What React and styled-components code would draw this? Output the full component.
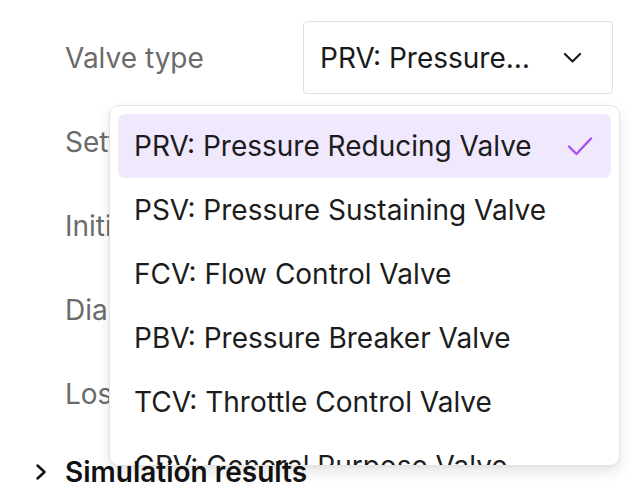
import styled, { createGlobalStyle } from "styled-components";

const GlobalStyle = createGlobalStyle`
  html, body {
    margin: 0;
    padding: 0;
    background: #ffffff;
  }
  body {
    font-family: Inter, "Noto Sans", "Liberation Sans", sans-serif;
    -webkit-font-smoothing: antialiased;
  }
`;

const Panel = styled.div`
  position: relative;
  width: 638px;
  height: 488px;
  box-sizing: border-box;
  padding: 21px 25px 0 35px;
  overflow: hidden;
  background: #ffffff;
`;

const Fields = styled.div`
  display: flex;
  flex-direction: column;
  gap: 11px;
  padding-left: 30px;
`;

const Field = styled.div`
  display: grid;
  grid-template-columns: 1fr 310px;
  align-items: center;
  height: 73px;
`;

const Label = styled.span`
  font-size: 28px;
  color: #6b6b6b;
  white-space: nowrap;
`;

const SelectWrap = styled.div`
  position: relative;
  height: 100%;
`;

const SelectBox = styled.button`
  display: flex;
  align-items: center;
  width: 100%;
  height: 100%;
  box-sizing: border-box;
  padding: 0 30px 0 16px;
  border: 1px solid #e0e0e0;
  border-radius: 4px;
  background: #ffffff;
  font: inherit;
  font-size: 28px;
  color: #1a1a1a;
  cursor: pointer;
  text-align: left;
`;

const SelectValue = styled.span`
  flex: 1;
  min-width: 0;
  overflow: hidden;
  white-space: nowrap;
  text-overflow: ellipsis;
  padding-right: 30px;
`;

const Input = styled.div`
  height: 100%;
  box-sizing: border-box;
  border: 1px solid #e0e0e0;
  border-radius: 4px;
  display: flex;
  align-items: center;
  padding: 0 16px;
  font-size: 28px;
  color: #1a1a1a;
`;

const Menu = styled.ul`
  position: absolute;
  top: calc(100% + 11px);
  right: -7px;
  width: 511px;
  height: 361px;
  box-sizing: border-box;
  margin: 0;
  padding: 8px 8px 0 8px;
  list-style: none;
  background: #ffffff;
  border: 1px solid #e4e4e4;
  border-radius: 10px;
  box-shadow: 0 6px 14px rgba(0, 0, 0, 0.1), 0 1px 3px rgba(0, 0, 0, 0.04);
  overflow: hidden;
  z-index: 5;
`;

const Option = styled.li`
  display: flex;
  align-items: center;
  justify-content: space-between;
  height: 64px;
  padding: 0 18px 0 16px;
  border-radius: 7px;
  font-size: 28px;
  color: #1c1c1c;
  white-space: nowrap;
  background: ${({ $selected }) => ($selected ? "#f0e8fd" : "transparent")};
`;

const Section = styled.div`
  position: relative;
  z-index: 10;
  display: flex;
  align-items: center;
  gap: 18px;
  height: 30px;
  margin-top: 27px;
  font-size: 28px;
  font-weight: 600;
  color: #111111;
`;

const Chevron = ({ dir = "down", size = 20, color = "#1a1a1a", stroke = 2.2 }) =>
  dir === "down" ? (
    <svg width={size} height={size * 0.6} viewBox="0 0 20 12" fill="none">
      <path d="M2 2l8 8 8-8" stroke={color} strokeWidth={stroke} strokeLinecap="round" strokeLinejoin="round" />
    </svg>
  ) : (
    <svg width={size * 0.75} height={size} viewBox="0 0 12 16" fill="none">
      <path d="M2.5 1.5l7 6.5-7 6.5" stroke={color} strokeWidth={stroke} strokeLinecap="round" strokeLinejoin="round" />
    </svg>
  );

const Check = () => (
  <svg width="26" height="20" viewBox="0 0 26 20" fill="none">
    <path d="M2 10.5l7.5 7.5L24 2.5" stroke="#a24ef0" strokeWidth="2.3" strokeLinecap="round" strokeLinejoin="round" />
  </svg>
);

const valveTypes = [
  "PRV: Pressure Reducing Valve",
  "PSV: Pressure Sustaining Valve",
  "FCV: Flow Control Valve",
  "PBV: Pressure Breaker Valve",
  "TCV: Throttle Control Valve",
  "GPV: General Purpose Valve",
];

const fields = [
  { label: "Setting", value: "60" },
  { label: "Initial status", value: "Open" },
  { label: "Diameter", value: "300" },
  { label: "Loss coeff.", value: "0" },
];

export default function App() {
  const selected = valveTypes[0];
  return (
    <>
      <GlobalStyle />
      <Panel>
        <Fields>
          <Field>
            <Label>Valve type</Label>
            <SelectWrap>
              <SelectBox>
                <SelectValue>{selected}</SelectValue>
                <Chevron dir="down" size={19} />
              </SelectBox>
              <Menu>
                {valveTypes.map((t) => (
                  <Option key={t} $selected={t === selected}>
                    {t}
                    {t === selected && <Check />}
                  </Option>
                ))}
              </Menu>
            </SelectWrap>
          </Field>
          {fields.map((f) => (
            <Field key={f.label}>
              <Label>{f.label}</Label>
              <Input>{f.value}</Input>
            </Field>
          ))}
        </Fields>
        <Section>
          <Chevron dir="right" size={16} color="#111111" stroke={2.4} />
          Simulation results
        </Section>
      </Panel>
    </>
  );
}
